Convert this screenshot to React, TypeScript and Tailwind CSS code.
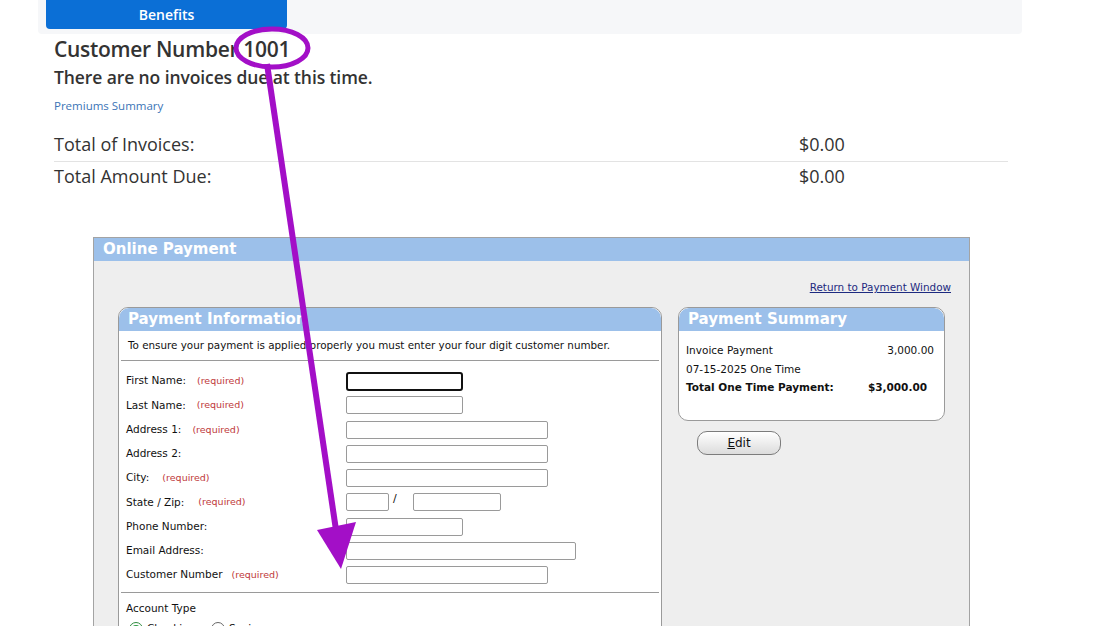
import React from 'react';

type Field = {
  label: string;
  required?: boolean;
  gap: string;
  input: React.ReactNode;
};

const box = 'h-[18px] border border-[#9a9a9a] rounded-[2px] bg-white';

const fields: Field[] = [
  { label: 'First Name:', required: true, gap: 'ml-[11px]', input: <div className="w-[117px] h-[19px] border-2 border-[#111] rounded-[3px] bg-white" /> },
  { label: 'Last Name:', required: true, gap: 'ml-[11px]', input: <div className={`w-[117px] ${box}`} /> },
  { label: 'Address 1:', required: true, gap: 'ml-[11px]', input: <div className={`w-[202px] ${box}`} /> },
  { label: 'Address 2:', gap: '', input: <div className={`w-[202px] ${box}`} /> },
  { label: 'City:', required: true, gap: 'ml-[13px]', input: <div className={`w-[202px] ${box}`} /> },
  {
    label: 'State / Zip:',
    required: true,
    gap: 'ml-[14px]',
    input: (
      <div className="flex items-start">
        <div className={`w-[43px] ${box}`} />
        <span className="ml-[4px] mr-[16px] text-[11px] leading-[12px]">/</span>
        <div className={`w-[88px] ${box}`} />
      </div>
    ),
  },
  { label: 'Phone Number:', gap: '', input: <div className={`w-[117px] ${box}`} /> },
  { label: 'Email Address:', gap: '', input: <div className={`w-[230px] ${box}`} /> },
  { label: 'Customer Number', required: true, gap: 'ml-[9px]', input: <div className={`w-[202px] ${box}`} /> },
];

function PanelHeader({ title }: { title: string }) {
  return (
    <div className="h-[23px] bg-[#9cc0ea] rounded-t-[10px] flex items-center pl-[9px] text-white font-bold text-[15px] leading-none">
      {title}
    </div>
  );
}

export default function App() {
  return (
    <div className="relative w-[1120px] h-[626px] overflow-hidden bg-white text-[#333] font-['Open_Sans',sans-serif]">
      {/* top nav strip */}
      <div className="ml-[38px] w-[984px] h-[34px] bg-[#f6f7f9] rounded-b-[4px] pl-[8px]">
        <div className="w-[241px] h-[29px] bg-[#0b6fd6] rounded-b-[4px] flex items-center justify-center text-white text-[14px] font-semibold">
          Benefits
        </div>
      </div>

      <div className="ml-[54px] w-[954px]">
        <h1 className="mt-[1px] text-[21px] leading-[28px] font-semibold tracking-[-0.3px] text-[#333]">Customer Number 1001</h1>
        <p className="mt-[2px] text-[17.5px] leading-[24px] font-semibold tracking-[-0.1px] text-[#333]">There are no invoices due at this time.</p>
        <a className="block mt-[9px] text-[11.5px] leading-[16px] text-[#3b74b6]">Premiums Summary</a>

        <div className="mt-[14px] flex items-center h-[34px] border-b border-[#e3e3e3] text-[18px] font-medium">
          <span className="w-[745px]">Total of Invoices:</span>
          <span>$0.00</span>
        </div>
        <div className="flex items-center h-[28px] text-[18px] font-medium">
          <span className="w-[745px]">Total Amount Due:</span>
          <span>$0.00</span>
        </div>
      </div>

      {/* online payment window */}
      <div className="ml-[93px] mt-[47px] w-[877px] h-[400px] border border-[#a3a3a3] bg-[#eeeeee] font-['DejaVu_Sans',Verdana,sans-serif] text-[#111]">
        <div className="h-[23px] bg-[#9cc0ea] flex items-center pl-[9px] text-white font-bold text-[15px] leading-none">
          Online Payment
        </div>

        <div className="flex justify-end pr-[18px] pt-[20px]">
          <a className="text-[10.4px] leading-[12px] underline text-[#1d2a80]">Return to Payment Window</a>
        </div>

        <div className="flex items-start mt-[14px] pl-[24px]">
          {/* payment information */}
          <div className="w-[544px] h-[400px] border border-[#9a9a9a] rounded-t-[10px] bg-white">
            <PanelHeader title="Payment Information" />
            <div className="px-[2px]">
              <div className="h-[30px] flex items-center pl-[7px] text-[10.35px] border-b border-[#9a9a9a]">
                To ensure your payment is applied properly you must enter your four digit customer number.
              </div>
              <div className="pt-[8px] pb-[5px] border-b border-[#9a9a9a]">
                {fields.map((f) => (
                  <div key={f.label} className="h-[24.25px] flex items-center">
                    <div className="w-[225px] pl-[5px] flex items-center text-[10.5px]">
                      <span>{f.label}</span>
                      {f.required && <span className={`${f.gap || 'ml-[11px]'} text-[9.5px] text-[#c0393b]`}>(required)</span>}
                    </div>
                    {f.input}
                  </div>
                ))}
              </div>
              <div className="pl-[5px] pt-[8px] text-[10.5px] leading-[14px]">Account Type</div>
              <div className="pl-[8px] pt-[6px] flex items-center text-[10.5px]">
                <span className="w-[14px] h-[14px] rounded-full border border-[#2e8b3e] flex items-center justify-center">
                  <span className="w-[8px] h-[8px] rounded-full bg-[#2e9b45]" />
                </span>
                <span className="ml-[4px] w-[64px]">Checking</span>
                <span className="w-[14px] h-[14px] rounded-full border border-[#666] bg-white" />
                <span className="ml-[4px]">Savings</span>
              </div>
            </div>
          </div>

          {/* payment summary */}
          <div className="ml-[16px] flex flex-col">
            <div className="w-[267px] h-[114px] border border-[#9a9a9a] rounded-[10px] bg-white overflow-hidden">
              <PanelHeader title="Payment Summary" />
              <div className="pl-[7px] pr-[10px] pt-[11px] text-[10.5px]">
                <div className="h-[18.5px] flex items-center justify-between">
                  <span>Invoice Payment</span>
                  <span>3,000.00</span>
                </div>
                <div className="h-[18.5px] flex items-center">07-15-2025 One Time</div>
                <div className="h-[18.5px] flex items-center justify-between font-bold">
                  <span>Total One Time Payment:</span>
                  <span className="mr-[7px]">$3,000.00</span>
                </div>
              </div>
            </div>
            <button className="ml-[19px] mt-[10px] w-[84px] h-[24px] rounded-[10px] border border-[#7c7c7c] bg-gradient-to-b from-white to-[#dcdcdc] text-[12px] text-[#111] leading-none">
              <span className="underline">E</span>dit
            </button>
          </div>
        </div>
      </div>

      {/* annotation overlay */}
      <svg className="absolute inset-0 pointer-events-none" width="1120" height="626" viewBox="0 0 1120 626">
        <ellipse cx="272" cy="48" rx="36" ry="19" fill="none" stroke="#a30fc7" strokeWidth="5" />
        <line x1="267" y1="64" x2="336" y2="530" stroke="#a30fc7" strokeWidth="6" />
        <polygon points="317,530 356,522 341,569" fill="#a30fc7" />
      </svg>
    </div>
  );
}
